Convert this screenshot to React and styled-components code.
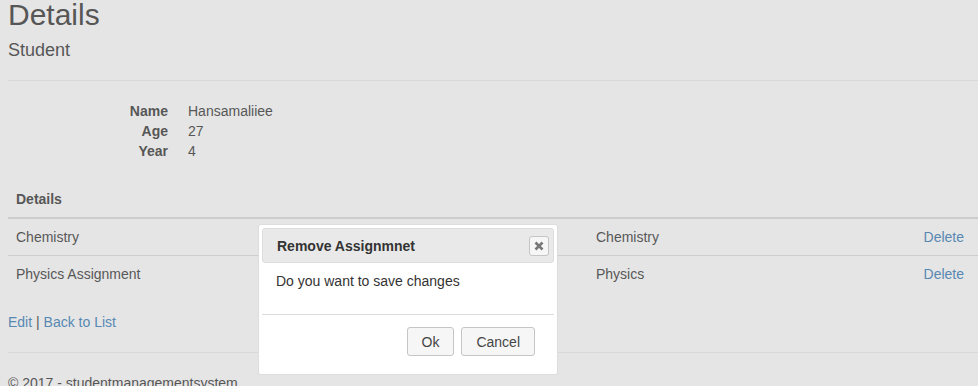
import styled, { createGlobalStyle } from 'styled-components'

const GlobalStyle = createGlobalStyle`
  html, body {
    margin: 0;
    padding: 0;
    background: #fff;
    overflow: hidden;
  }
  body {
    font-family: 'Liberation Sans', Arial, sans-serif;
    font-size: 14px;
    line-height: 20px;
    color: #333;
  }
`

const rows = [
  { title: 'Chemistry', subject: 'Chemistry' },
  { title: 'Physics Assignment', subject: 'Physics' },
]

const fields = [
  ['Name', 'Hansamaliiee'],
  ['Age', '27'],
  ['Year', '4'],
]

export default function App() {
  return (
    <>
      <GlobalStyle />
      <Page>
        <Title>Details</Title>
        <SubTitle>Student</SubTitle>
        <Rule />

        <Fields>
          {fields.map(([label, value]) => (
            <FieldRow key={label}>
              <Term>{label}</Term>
              <Value>{value}</Value>
            </FieldRow>
          ))}
        </Fields>

        <Table>
          <HeadRow>
            <HeadCell>Details</HeadCell>
            <HeadCell />
            <HeadCell />
            <HeadCell />
          </HeadRow>
          {rows.map((row) => (
            <BodyRow key={row.title}>
              <Cell>{row.title}</Cell>
              <Cell />
              <Cell>{row.subject}</Cell>
              <Cell align="right">
                <Link href="#">Delete</Link>
              </Cell>
            </BodyRow>
          ))}
        </Table>

        <Actions>
          <Link href="#">Edit</Link> | <Link href="#">Back to List</Link>
        </Actions>

        <Rule />
        <Footer>© 2017 - studentmanagementsystem</Footer>
      </Page>

      <Overlay />

      <Dialog>
        <TitleBar>
          <DialogTitle>Remove Assignmnet</DialogTitle>
          <CloseButton aria-label="Close">
            <svg width="10" height="10" viewBox="0 0 10 10">
              <path d="M1.5 1.5 L8.5 8.5 M8.5 1.5 L1.5 8.5" stroke="#777" strokeWidth="2.6" />
            </svg>
          </CloseButton>
        </TitleBar>
        <DialogBody>Do you want to save changes</DialogBody>
        <ButtonPane>
          <PaneButton>Ok</PaneButton>
          <PaneButton>Cancel</PaneButton>
        </ButtonPane>
      </Dialog>
    </>
  )
}

const Page = styled.div`
  padding: 0 0 0 8px;
`

const Title = styled.h2`
  margin: -2px 0 9px;
  font-size: 30px;
  font-weight: 500;
  line-height: 33px;
`

const SubTitle = styled.h4`
  margin: 0;
  font-size: 18px;
  font-weight: 500;
  line-height: 20px;
`

const Rule = styled.hr`
  margin: 20px 0;
  border: 0;
  border-top: 1px solid #eee;
`

const Fields = styled.dl`
  margin: 0 0 20px;
`

const FieldRow = styled.div`
  display: flex;
`

const Term = styled.dt`
  width: 160px;
  text-align: right;
  font-weight: 700;
`

const Value = styled.dd`
  margin: 0 0 0 20px;
`

const Table = styled.div`
  margin-bottom: 20px;
`

const HeadRow = styled.div`
  display: grid;
  grid-template-columns: 290px 290px 1fr 120px;
  border-bottom: 2px solid #ddd;
`

const BodyRow = styled(HeadRow)`
  border-bottom: 0;
  & + & {
    border-top: 1px solid #ddd;
  }
`

const HeadCell = styled.div`
  padding: 8px;
  font-weight: 700;
`

const Cell = styled.div`
  padding: 8px ${({ align }) => (align === 'right' ? '14px' : '8px')} 8px 8px;
  text-align: ${({ align }) => align || 'left'};
`

const Link = styled.a`
  color: #337ab7;
  text-decoration: none;
`

const Actions = styled.p`
  margin: 0 0 10px;
`

const Footer = styled.p`
  margin: 0;
`

const Overlay = styled.div`
  position: fixed;
  inset: 0;
  background: #aaa;
  opacity: 0.3;
`

const Dialog = styled.div`
  position: absolute;
  left: 258px;
  top: 224px;
  width: 292px;
  padding: 3px;
  background: #fff;
  border: 1px solid #ddd;
  border-radius: 3px;
  font-family: 'Liberation Sans', Arial, sans-serif;
  font-size: 14px;
  color: #333;
`

const TitleBar = styled.div`
  display: flex;
  align-items: center;
  justify-content: space-between;
  height: 33px;
  padding: 0 4px 0 14px;
  background: #e9e9e9;
  border: 1px solid #ddd;
  border-radius: 3px;
`

const DialogTitle = styled.span`
  font-weight: 700;
  color: #333;
`

const CloseButton = styled.button`
  display: flex;
  align-items: center;
  justify-content: center;
  width: 20px;
  height: 20px;
  padding: 0;
  background: #f6f6f6;
  border: 1px solid #c5c5c5;
  border-radius: 3px;
`

const DialogBody = styled.div`
  padding: 8px 14px 0;
  height: 43px;
  color: #333;
`

const ButtonPane = styled.div`
  display: flex;
  justify-content: flex-end;
  gap: 7px;
  padding: 12px 19px 15px 0;
  border-top: 1px solid #ddd;
`

const PaneButton = styled.button`
  height: 29px;
  padding: 0 14px;
  background: #f6f6f6;
  border: 1px solid #c5c5c5;
  border-radius: 3px;
  font-family: 'Liberation Sans', Arial, sans-serif;
  font-size: 14px;
  color: #454545;
`
